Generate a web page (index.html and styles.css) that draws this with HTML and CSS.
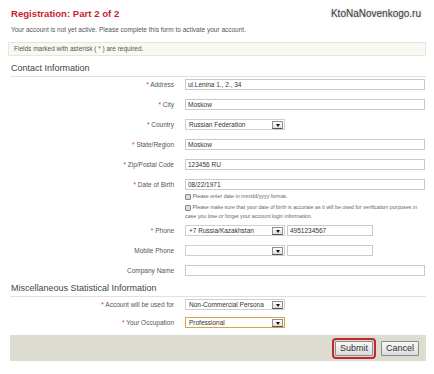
FILE: index.html
```html
<!DOCTYPE html>
<html lang="en">
<head>
  <meta charset="UTF-8" />
  <meta name="viewport" content="width=device-width, initial-scale=1.0" />
  <title>Registration: Part 2 of 2</title>
  <link rel="stylesheet" href="styles.css">
</head>
<body>
  <header>
    <h1>Registration: Part 2 of 2</h1>
    <span class="site">KtoNaNovenkogo.ru</span>
  </header>
  <p class="intro">Your account is not yet active. Please complete this form to activate your account.</p>
  <div class="note">Fields marked with asterisk ( <span class="req">*</span> ) are required.</div>

  <form>
    <h2>Contact Information</h2>
    <div class="row first">
      <label><span class="req">*</span> Address</label>
      <input type="text" class="wide" value="ul.Lenina 1., 2., 34">
    </div>
    <div class="row">
      <label><span class="req">*</span> City</label>
      <input type="text" class="wide" value="Moskow">
    </div>
    <div class="row">
      <label><span class="req">*</span> Country</label>
      <div class="select"><span>Russian Federation</span><i class="arrow"></i></div>
    </div>
    <div class="row">
      <label><span class="req">*</span> State/Region</label>
      <input type="text" class="wide" value="Moskow">
    </div>
    <div class="row">
      <label><span class="req">*</span> Zip/Postal Code</label>
      <input type="text" class="wide" value="123456 RU">
    </div>
    <div class="row">
      <label><span class="req">*</span> Date of Birth</label>
      <input type="text" class="wide" value="08/22/1971">
    </div>
    <p class="help"><i class="info"></i> Please enter date in mm/dd/yyyy format.</p>
    <p class="help long"><i class="info"></i> Please make sure that your date of birth is accurate as it will be used for verification purposes in case you lose or forget your account login information.</p>
    <div class="row phone">
      <label><span class="req">*</span> Phone</label>
      <div class="select"><span>+7 Russia/Kazakhstan</span><i class="arrow"></i></div>
      <input type="text" class="short" value="4951234567">
    </div>
    <div class="row">
      <label>Mobile Phone</label>
      <div class="select"><span></span><i class="arrow"></i></div>
      <input type="text" class="short" value="">
    </div>
    <div class="row">
      <label>Company Name</label>
      <input type="text" class="wide" value="">
    </div>

    <h2>Miscellaneous Statistical Information</h2>
    <div class="row first">
      <label><span class="req">*</span> Account will be used for</label>
      <div class="select"><span>Non-Commercial Persona</span><i class="arrow"></i></div>
    </div>
    <div class="row occupation">
      <label><span class="req">*</span> Your Occupation</label>
      <div class="select active"><span>Professional</span><i class="arrow"></i></div>
    </div>

    <div class="actions">
      <button type="button" class="submit">Submit</button>
      <button type="button">Cancel</button>
    </div>
  </form>
</body>
</html>
```

FILE: styles.css
```css
body {
  margin: 0;
  padding: 0 8px;
  font-family: "Liberation Sans", Arial, sans-serif;
  font-size: 6.5px;
  color: #555;
  background: #fff;
}
header {
  display: flex;
  justify-content: space-between;
  align-items: center;
  height: 12px;
  margin-top: 7px;
  padding: 0 5px 0 3px;
}
h1 {
  margin: 0;
  font-size: 9.6px;
  font-weight: bold;
  color: #c41f2e;
}
.site {
  font-size: 10px;
  color: #3a3a3a;
  text-shadow: 0 0 3px #bbb;
}
.intro {
  margin: 6px 0 0 3px;
  line-height: 10px;
}
.note {
  margin-top: 7px;
  height: 12px;
  line-height: 12px;
  padding-left: 5px;
  border: 1px solid #e6e6dc;
  background: #f9f9f4;
}
.req {
  color: #d32f2f;
}
h2 {
  margin: 5px 0 0 2px;
  padding-left: 1px;
  font-size: 9px;
  font-weight: normal;
  color: #444;
  line-height: 15px;
  border-bottom: 1px solid #e0e0e0;
}
.row {
  display: flex;
  align-items: center;
  height: 11px;
  margin-top: 9px;
}
.row.first {
  margin-top: 2px;
}
.row.phone {
  margin-top: 4px;
}
.row.occupation {
  margin-top: 7px;
}
label {
  width: 166px;
  margin-right: 11px;
  text-align: right;
  color: #555;
}
input {
  height: 11px;
  box-sizing: border-box;
  padding: 0 2px;
  border: 1px solid #c9c9c9;
  font: inherit;
  color: #333;
  outline: none;
}
.wide {
  width: 240px;
}
.short {
  width: 86px;
  margin-left: 2px;
}
.select {
  display: flex;
  align-items: center;
  justify-content: space-between;
  width: 100px;
  height: 11px;
  box-sizing: border-box;
  padding: 0 1px 0 3px;
  border: 1px solid #cfcfcf;
  color: #333;
  overflow: hidden;
  white-space: nowrap;
}
.select.active {
  border-color: #e0a040;
}
.arrow {
  display: flex;
  align-items: flex-end;
  justify-content: center;
  flex: none;
  width: 11px;
  height: 8px;
  box-sizing: border-box;
  padding-bottom: 1px;
  border: 1px solid #909090;
  border-bottom-color: #555;
  background: linear-gradient(#fff, #dedede);
}
.arrow::after {
  content: "";
  border-left: 2.5px solid transparent;
  border-right: 2.5px solid transparent;
  border-top: 3px solid #111;
}
.help {
  width: 240px;
  margin: 2px 0 0 177px;
  font-size: 5.3px;
  line-height: 8px;
  color: #666;
}
.help.long {
  margin-top: 3px;
  line-height: 9px;
}
.info {
  display: inline-block;
  width: 4px;
  height: 4px;
  border: 0.6px solid #888;
  border-radius: 1px;
  background: #ddd;
  vertical-align: middle;
}
.actions {
  display: flex;
  justify-content: flex-end;
  align-items: center;
  gap: 8px;
  height: 26px;
  margin: 7px 0 0 2px;
  padding-right: 7px;
  background: #dcdcd0;
}
button {
  height: 15px;
  padding: 0 4px;
  border: 1px solid #8d8d8d;
  border-radius: 1px;
  background: linear-gradient(#f7f7f7, #dcdcdc);
  font-family: "Liberation Sans", Arial, sans-serif;
  font-size: 9px;
  color: #333;
}
.submit {
  outline: 2px solid #c1272d;
  outline-offset: 1px;
}
```
